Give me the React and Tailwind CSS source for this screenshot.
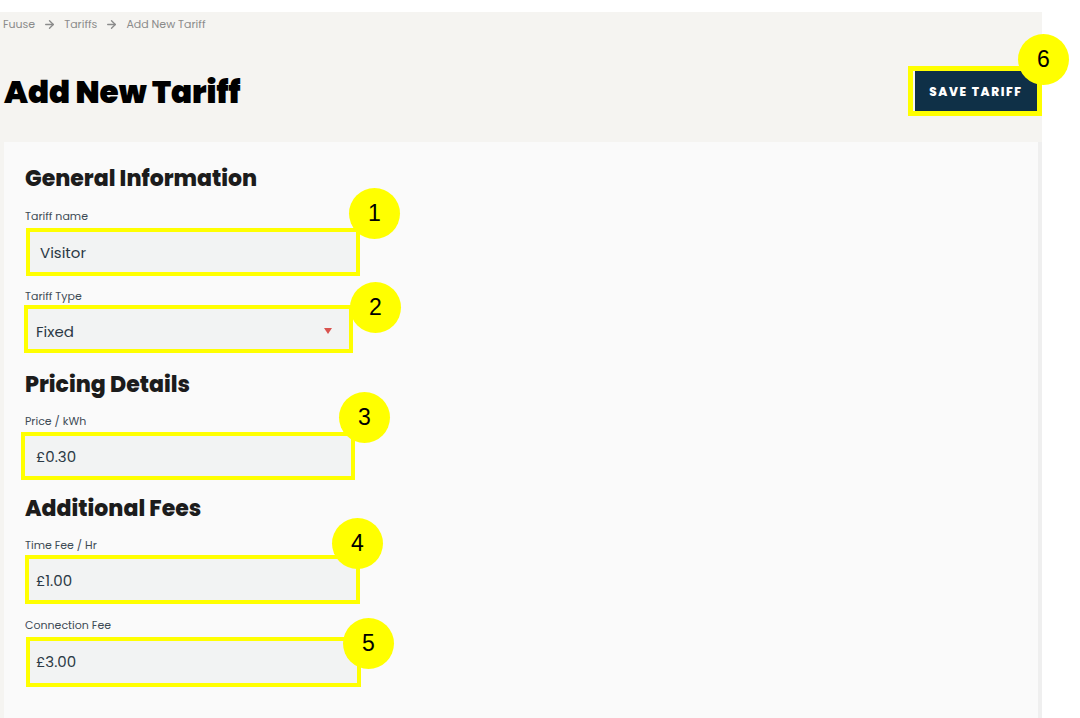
import { ArrowRight } from 'lucide-react'

const FONT = { fontFamily: 'Poppins, Inter, "Noto Sans", sans-serif' }

// Numbered yellow annotation marker
function Badge({ n, className }) {
  return (
    <div
      className={`absolute w-[51px] h-[51px] rounded-full bg-[#ffff00] flex items-center justify-center text-[23px] text-black ${className}`}
      style={{ fontFamily: '"Liberation Sans", Arial, sans-serif' }}
    >
      {n}
    </div>
  )
}

function Field({ label, value, n, labelClass, boxClass, badgeClass, textClass, select }) {
  return (
    <>
      <div className={`text-[11px] leading-[16px] text-[#3d4a55] ${labelClass}`}>{label}</div>
      <div className={`relative border-[4px] border-[#ffff00] bg-[#f2f3f3] flex items-center ${boxClass}`}>
        <span className={`text-[15px] text-[#2b3945] ${textClass}`}>{value}</span>
        {select && (
          <span className="absolute right-[17px] top-[19px] w-0 h-0 border-l-[4px] border-r-[4px] border-t-[6px] border-l-transparent border-r-transparent border-t-[#d9534f]" />
        )}
        <Badge n={n} className={badgeClass} />
      </div>
    </>
  )
}

export default function App() {
  return (
    <div className="min-h-screen bg-white pt-[12px] overflow-hidden" style={FONT}>
      <div className="w-[1042px] min-h-[706px] bg-[#f5f4f1] flex flex-col">
        {/* Breadcrumb */}
        <div className="h-[30px] pl-[3px] pt-[2px] flex items-start">
          <div className="h-[20px] flex items-center gap-[8px] text-[11px] text-[#8b8b8b]">
            <span>Fuuse</span>
            <ArrowRight size={13} strokeWidth={2.5} />
            <span>Tariffs</span>
            <ArrowRight size={13} strokeWidth={2.5} />
            <span>Add New Tariff</span>
          </div>
        </div>

        {/* Header */}
        <div className="h-[100px] flex items-center justify-between pl-[4px]">
          <h1 className="text-[31px] font-black text-black">Add New Tariff</h1>
          <div className="relative border-[5px] border-[#ffff00] mt-[-2px]">
            <button className="ml-[2px] w-[122px] h-[40px] pt-[2px] bg-[#0f3047] text-white text-[12px] font-extrabold tracking-[1.6px]">
              SAVE TARIFF
            </button>
            <Badge n="6" className="left-[105px] top-[-37px]" />
          </div>
        </div>

        {/* Form card */}
        <div className="ml-[4px] w-[1038px] flex-1 bg-[#fafafa] pl-[21px] pt-[23px] pb-[31px] border-r-[4px] border-[#efefef]">
          <h2 className="text-[22px] leading-[28px] font-extrabold text-[#1c1c1c]">General Information</h2>
          <Field
            label="Tariff name"
            value="Visitor"
            n="1"
            labelClass="mt-[15px]"
            boxClass="mt-[4px] ml-[1px] w-[334px] h-[48px]"
            textClass="pl-[10px] pt-[2px]"
            badgeClass="left-[319px] top-[-44px]"
          />
          <Field
            label="Tariff Type"
            value="Fixed"
            n="2"
            select
            labelClass="mt-[12px]"
            boxClass="mt-[1px] ml-[-1px] w-[329px] h-[48px]"
            textClass="pl-[8px] pt-[6px]"
            badgeClass="left-[322px] top-[-27px]"
          />

          <h2 className="mt-[18px] text-[22px] leading-[28px] font-extrabold text-[#1c1c1c]">Pricing Details</h2>
          <Field
            label="Price / kWh"
            value="£0.30"
            n="3"
            labelClass="mt-[14px]"
            boxClass="mt-[3px] ml-[-4px] w-[334px] h-[48px]"
            textClass="pl-[11px] pt-[2px]"
            badgeClass="left-[314px] top-[-44px]"
          />

          <h2 className="mt-[15px] text-[22px] leading-[28px] font-extrabold text-[#1c1c1c]">Additional Fees</h2>
          <Field
            label="Time Fee / Hr"
            value="£1.00"
            n="4"
            labelClass="mt-[14px]"
            boxClass="mt-[2px] w-[335px] h-[49px]"
            textClass="pl-[7px] pt-[4px]"
            badgeClass="left-[303px] top-[-41px]"
          />
          <Field
            label="Connection Fee"
            value="£3.00"
            n="5"
            labelClass="mt-[13px]"
            boxClass="mt-[4px] ml-[1px] w-[335px] h-[50px]"
            textClass="pl-[6px]"
            badgeClass="left-[313px] top-[-23px]"
          />
        </div>
      </div>
    </div>
  )
}
